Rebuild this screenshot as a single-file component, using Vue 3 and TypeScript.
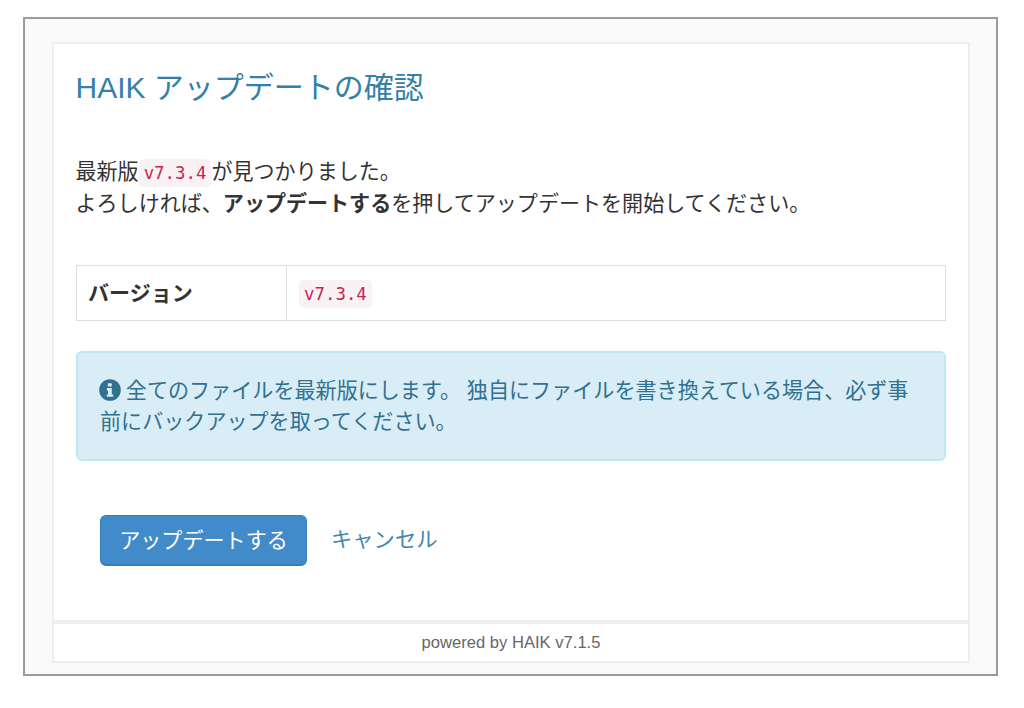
<script setup lang="ts">
const version: string = 'v7.3.4'
</script>

<template>
  <div class="page">
    <div class="frame">
      <div class="card">
        <main class="main">
          <h2 class="title">HAIK アップデートの確認</h2>
          <p class="lead">
            最新版<code class="code">{{ version }}</code>が見つかりました。<br />
            よろしければ、<strong>アップデートする</strong>を押してアップデートを開始してください。
          </p>
          <table class="table">
            <tbody>
              <tr>
                <th>バージョン</th>
                <td><code class="code">{{ version }}</code></td>
              </tr>
            </tbody>
          </table>
          <div class="alert">
            <svg class="icon" viewBox="0 0 22 22" width="22" height="22" aria-hidden="true">
              <circle cx="11" cy="11" r="10.8" fill="#31708f" />
              <rect x="8.8" y="4.2" width="4" height="3.2" rx="0.6" fill="#d9edf7" />
              <path d="M7.8 9h5v6.4h1.4v2.4H7.8v-2.4h1.2v-4H7.8z" fill="#d9edf7" />
            </svg>
            全てのファイルを最新版にします。 独自にファイルを書き換えている場合、必ず事前にバックアップを取ってください。
          </div>
          <div class="actions">
            <button class="btn" type="button">アップデートする</button>
            <a class="cancel" href="#">キャンセル</a>
          </div>
        </main>
        <footer class="footer">powered by HAIK v7.1.5</footer>
      </div>
    </div>
  </div>
</template>

<style>
body {
  background: #fff;
}
</style>

<style scoped>
.page {
  width: 1024px;
  height: 708px;
  padding: 17px 26px 0 23px;
  box-sizing: border-box;
  font-family: "Liberation Sans", "Noto Sans CJK JP", sans-serif;
  color: #333;
}
.frame {
  height: 659px;
  box-sizing: border-box;
  border: 2px solid #9b9b9b;
  background: #fafafa;
  padding: 23px 26px 11px 27px;
}
.card {
  height: 100%;
  display: flex;
  flex-direction: column;
  box-sizing: border-box;
}
.main {
  flex: 1;
  background: #fff;
  border: 2px solid #eee;
  border-bottom: 0;
  padding: 0 22px;
}
.title {
  margin: 24px 0 0 -0.5px;
  font-size: 30px;
  line-height: 40px;
  font-weight: 400;
  color: #3480a8;
}
.lead {
  margin: 48px 0 0 -0.5px;
  font-size: 21.05px;
  line-height: 31.5px;
}
.code {
  font-family: "DejaVu Sans Mono", monospace;
  font-size: 17.4px;
  line-height: 1;
  color: #c7254e;
  background: #f9f2f4;
  padding: 4px 5px;
  border-radius: 5px;
}
.table {
  width: 870px;
  margin-top: 46px;
  border-collapse: collapse;
}
.table th,
.table td {
  height: 54px;
  padding: 0 12px;
  border: 1px solid #ddd;
  font-size: 21.05px;
  text-align: left;
}
.table th {
  width: 186px;
  height: 51px;
  padding: 0 12px 3px 11px;
  font-weight: 700;
}
.alert {
  margin-top: 30px;
  box-sizing: border-box;
  height: 110px;
  padding: 23px 22px 0;
  background: #d9edf7;
  border: 2px solid #bce8f1;
  border-radius: 6px;
  color: #31708f;
  font-size: 21.08px;
  line-height: 30.5px;
}
.icon {
  vertical-align: -3px;
  margin: 0 -1px 0 -1px;
}
.actions {
  display: flex;
  align-items: center;
  margin-top: 54px;
  padding-left: 24px;
  gap: 24px;
}
.btn {
  height: 51px;
  width: 207px;
  padding: 0 0 3px;
  font: inherit;
  font-size: 21.08px;
  color: #fff;
  background: #428bca;
  border: 1px solid #357ebd;
  border-bottom-width: 2px;
  border-radius: 6px;
}
.cancel {
  padding-bottom: 6px;
  font-size: 21.3px;
  color: #4a85ad;
  text-decoration: none;
}
.footer {
  height: 43px;
  box-sizing: border-box;
  background: #fff;
  border: 2px solid #eee;
  border-top-width: 4px;
  text-align: center;
  font-size: 16.6px;
  line-height: 37px;
  color: #666;
}
</style>
